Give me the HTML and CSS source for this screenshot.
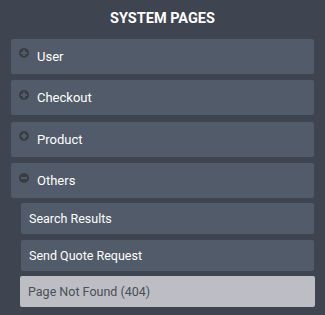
FILE: index.html
```html
<!DOCTYPE html>
<html lang="en">
  <head>
    <meta charset="UTF-8" />
    <title>System Pages</title>
    <link rel="stylesheet" href="styles.css">
  </head>
  <body>
    <div class="sidebar">
      <h2 class="title">SYSTEM PAGES</h2>
      <div class="group">
        <div class="group-head"><span class="toggle plus"></span>User</div>
      </div>
      <div class="group">
        <div class="group-head"><span class="toggle plus"></span>Checkout</div>
      </div>
      <div class="group">
        <div class="group-head"><span class="toggle plus"></span>Product</div>
      </div>
      <div class="group open">
        <div class="group-head"><span class="toggle minus"></span>Others</div>
        <ul class="pages">
          <li class="page">Search Results</li>
          <li class="page">Send Quote Request</li>
          <li class="page active">Page Not Found (404)</li>
        </ul>
      </div>
    </div>
  </body>
</html>
```

FILE: styles.css
```css
html, body {
  margin: 0;
  height: 100%;
  background: #3e4450;
}
.sidebar {
  font-family: Roboto, "Liberation Sans", sans-serif;
  padding: 0 11px 0 11px;
  display: flex;
  flex-direction: column;
  gap: 6.5px;
}
.title {
  margin: 0;
  padding: 10px 0 5px;
  text-align: center;
  color: #fff;
  font-size: 14.5px;
  font-weight: 700;
  line-height: 17px;
}
.group-head {
  display: flex;
  align-items: center;
  height: 35px;
  background: #525b69;
  border-radius: 2px;
  color: #fff;
  font-size: 13px;
  padding-left: 8px;
}
.toggle {
  position: relative;
  width: 10px;
  height: 10px;
  border-radius: 50%;
  background: #393d44;
  margin-right: 8px;
  margin-top: -6px;
}
.toggle::before,
.toggle.plus::after {
  content: "";
  position: absolute;
  background: #525b69;
  left: 2px;
  top: 4px;
  width: 6px;
  height: 2px;
}
.toggle.plus::after {
  left: 4px;
  top: 2px;
  width: 2px;
  height: 6px;
}
.pages {
  list-style: none;
  margin: 5px 0 0 10px;
  padding: 0;
  display: flex;
  flex-direction: column;
  gap: 6px;
}
.page {
  height: 31px;
  display: flex;
  align-items: center;
  padding-left: 8px;
  background: #525b69;
  border-radius: 2px;
  color: #fff;
  font-size: 12.5px;
}
.page.active {
  background: #bcbec4;
  color: #4a4e56;
  margin: -1px -1px 0 -1px;
  height: 31px;
}
```
